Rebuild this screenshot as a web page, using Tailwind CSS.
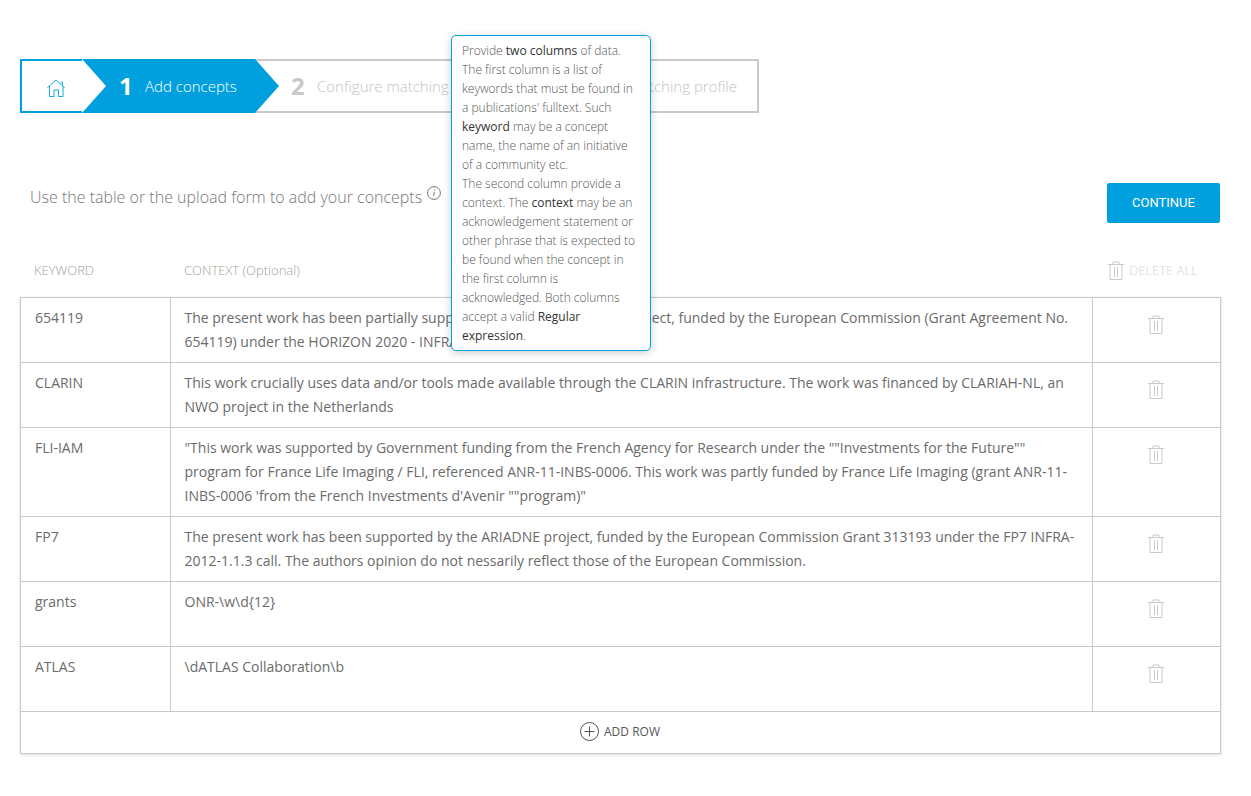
<!DOCTYPE html>
<html lang="en">
<head>
    <meta charset="UTF-8">
    <title>Add concepts</title>
    <script src="https://cdn.jsdelivr.net/npm/@tailwindcss/browser@4"></script>
</head>
<body class="bg-white font-['Open_Sans',sans-serif] text-[#6b6b6b]">
<div class="relative h-[796px] w-[1251px] overflow-hidden pt-[59px] pl-[20px]">
    <!-- Stepper -->
    <div class="flex h-[54px] w-[739px]">
        <div class="flex w-[62px] shrink-0 items-center justify-center border-y-2 border-l-2 border-[#00a0de] pl-[8px]">
            <svg class="mt-[3px] h-[18px] w-[18px] text-[#00a0de]" viewBox="0 0 18 18" fill="none" stroke="currentColor" stroke-width="0.9">
                <path d="M0.3 8.8 9 1l8.7 7.8M2.5 7v10.5H7V11h4.5v6.5h4.5V7M13.5 3.2h2v3"/>
            </svg>
        </div>
        <div class="z-10 flex w-[197px] shrink-0 items-center bg-[#00a0de] pl-[37px] text-white [clip-path:polygon(0_0,173px_0,100%_50%,173px_100%,0_100%,24px_50%)]">
            <span class="w-[26px] text-[24px] font-bold">1</span>
            <span class="text-[15px] font-light">Add concepts</span>
        </div>
        <div class="-ml-[24px] flex flex-1 items-center border-y-2 border-r-2 border-[#c9c9c9] pl-[36px]">
            <span class="w-[26px] text-[24px] font-bold text-[#c9c9c9]">2</span>
            <span class="text-[15px] font-light whitespace-nowrap text-[#c4c4c4]">Configure matching</span>
            <span class="ml-auto pr-[20px] text-[15px] font-light whitespace-nowrap text-[#c4c4c4]">matching profile</span>
        </div>
    </div>

    <!-- Tooltip -->
    <div class="absolute top-[35px] left-[451px] z-20 h-[316px] w-[200px] rounded-[5px] border border-[#00a0de] bg-white px-[10px] py-[5px] text-[12px] leading-[19px] font-light text-[#555] shadow-[0_2px_8px_rgba(0,0,0,0.2)]">
        Provide <span class="font-normal text-[#333]">two columns</span> of data.<br>
        The first column is a list of keywords that must be found in a publications' fulltext. Such <span class="font-normal text-[#333]">keyword</span> may be a concept name, the name of an initiative of a community etc.<br>
        The second column provide a context. The <span class="font-normal text-[#333]">context</span> may be an acknowledgement statement or other phrase that is expected to be found when the concept in the first column is acknowledged. Both columns accept a valid <span class="font-normal text-[#333]">Regular expression</span>.
    </div>

    <!-- Title row -->
    <div class="mt-[70px] flex h-[40px] w-[1200px] justify-between pl-[10px]">
        <div class="flex pt-[2px] text-[16px] font-light text-[#777]">
            Use the table or the upload form to add your concepts
            <svg class="mt-[1px] ml-[5px] h-[14px] w-[14px] text-[#666]" viewBox="0 0 14 14" fill="none" stroke="currentColor" stroke-width="0.9">
                <circle cx="7" cy="7" r="6.4"/><path d="M7.3 6 6.7 10M7.6 3.8 7.5 4.8"/>
            </svg>
        </div>
        <button class="h-[40px] w-[113px] rounded-[2px] bg-[#00a0de] font-['Roboto',sans-serif] text-[13px] text-white">CONTINUE</button>
    </div>

    <!-- Column titles -->
    <div class="mt-[26px] flex h-[48px] w-[1200px] items-start pt-[10px] text-[13px] font-light text-[#a8a098]">
        <div class="w-[150px] pl-[14px] leading-[22px]">KEYWORD</div>
        <div class="flex-1 pl-[14px] leading-[22px]">CONTEXT (Optional)</div>
        <div class="flex w-[112px] items-center gap-[5px] pt-[1px] leading-[20px] text-[#d6d6d6]">
            <svg class="h-[19px] w-[16px] text-[#c9c9c9]" viewBox="0 0 16 19" fill="none" stroke="currentColor">
                <path d="M0 3.5h16M5 3.5V1h6v2.5M2 3.5v15h12v-15M6.5 6v10M9.5 6v10"/>
            </svg>
            DELETE ALL
        </div>
    </div>

    <!-- Table -->
    <div class="w-[1201px] border border-[#c9c9c9] text-[14px] leading-[24px] shadow-[0_1px_3px_rgba(0,0,0,0.15)]">
        <div class="flex h-[65px] border-b border-[#c9c9c9]">
            <div class="w-[150px] border-r border-[#c9c9c9] px-[14px] py-[8px]">654119</div>
            <div class="w-[922px] border-r border-[#c9c9c9] py-[8px] pr-[10px] pl-[13.5px]">The present work has been partially supported by the <span class="tracking-[0.4px]">PARTHENOS</span> project, funded by the European Commission (Grant Agreement No. 654119) under the HORIZON 2020 - INFRADEV-4-2014 call.</div>
            <div class="flex flex-1 justify-center pt-[17px] pr-[1px]">
                <svg class="h-[19px] w-[16px] text-[#c9c9c9]" viewBox="0 0 16 19" fill="none" stroke="currentColor"><path d="M0 3.5h16M5 3.5V1h6v2.5M2 3.5v15h12v-15M6.5 6v10M9.5 6v10"/></svg>
            </div>
        </div>
        <div class="flex h-[65px] border-b border-[#c9c9c9]">
            <div class="w-[150px] border-r border-[#c9c9c9] px-[14px] py-[8px]">CLARIN</div>
            <div class="w-[922px] border-r border-[#c9c9c9] py-[8px] pr-[10px] pl-[13.5px]">This work crucially uses data and/or tools made available through the CLARIN infrastructure. The work was financed by CLARIAH-NL, an NWO project in the Netherlands</div>
            <div class="flex flex-1 justify-center pt-[17px] pr-[1px]">
                <svg class="h-[19px] w-[16px] text-[#c9c9c9]" viewBox="0 0 16 19" fill="none" stroke="currentColor"><path d="M0 3.5h16M5 3.5V1h6v2.5M2 3.5v15h12v-15M6.5 6v10M9.5 6v10"/></svg>
            </div>
        </div>
        <div class="flex h-[89px] border-b border-[#c9c9c9]">
            <div class="w-[150px] border-r border-[#c9c9c9] px-[14px] py-[8px]">FLI-IAM</div>
            <div class="w-[922px] border-r border-[#c9c9c9] py-[8px] pr-[10px] pl-[13.5px]">"This work was supported by Government funding from the French Agency for Research under the ""Investments for the Future"" program for France Life Imaging / FLI, referenced ANR-11-INBS-0006. This work was partly funded by France Life Imaging (grant ANR-11-INBS-0006 'from the French Investments d'Avenir ""program)"</div>
            <div class="flex flex-1 justify-center pt-[17px] pr-[1px]">
                <svg class="h-[19px] w-[16px] text-[#c9c9c9]" viewBox="0 0 16 19" fill="none" stroke="currentColor"><path d="M0 3.5h16M5 3.5V1h6v2.5M2 3.5v15h12v-15M6.5 6v10M9.5 6v10"/></svg>
            </div>
        </div>
        <div class="flex h-[65px] border-b border-[#c9c9c9]">
            <div class="w-[150px] border-r border-[#c9c9c9] px-[14px] py-[8px]">FP7</div>
            <div class="w-[922px] border-r border-[#c9c9c9] py-[8px] pr-[10px] pl-[13.5px]">The present work has been supported by the ARIADNE project, funded by the European Commission Grant 313193 under the FP7 INFRA-2012-1.1.3 call. The authors opinion do not nessarily reflect those of the European Commission.</div>
            <div class="flex flex-1 justify-center pt-[17px] pr-[1px]">
                <svg class="h-[19px] w-[16px] text-[#c9c9c9]" viewBox="0 0 16 19" fill="none" stroke="currentColor"><path d="M0 3.5h16M5 3.5V1h6v2.5M2 3.5v15h12v-15M6.5 6v10M9.5 6v10"/></svg>
            </div>
        </div>
        <div class="flex h-[65px] border-b border-[#c9c9c9]">
            <div class="w-[150px] border-r border-[#c9c9c9] px-[14px] py-[8px]">grants</div>
            <div class="w-[922px] border-r border-[#c9c9c9] py-[8px] pr-[10px] pl-[13.5px]">ONR-\w\d{12}</div>
            <div class="flex flex-1 justify-center pt-[17px] pr-[1px]">
                <svg class="h-[19px] w-[16px] text-[#c9c9c9]" viewBox="0 0 16 19" fill="none" stroke="currentColor"><path d="M0 3.5h16M5 3.5V1h6v2.5M2 3.5v15h12v-15M6.5 6v10M9.5 6v10"/></svg>
            </div>
        </div>
        <div class="flex h-[65px] border-b border-[#c9c9c9]">
            <div class="w-[150px] border-r border-[#c9c9c9] px-[14px] py-[8px]">ATLAS</div>
            <div class="w-[922px] border-r border-[#c9c9c9] py-[8px] pr-[10px] pl-[13.5px]">\dATLAS Collaboration\b</div>
            <div class="flex flex-1 justify-center pt-[17px] pr-[1px]">
                <svg class="h-[19px] w-[16px] text-[#c9c9c9]" viewBox="0 0 16 19" fill="none" stroke="currentColor"><path d="M0 3.5h16M5 3.5V1h6v2.5M2 3.5v15h12v-15M6.5 6v10M9.5 6v10"/></svg>
            </div>
        </div>
        <div class="flex h-[41px] items-center justify-center gap-[5px] pr-[1px] pb-[2px] text-[12px] text-[#555]">
            <svg class="h-[19px] w-[19px] text-[#555]" viewBox="0 0 19 19" fill="none" stroke="currentColor">
                <circle cx="9.5" cy="9.5" r="9"/><path d="M9.5 4.5v10M4.5 9.5h10"/>
            </svg>
            ADD ROW
        </div>
    </div>
</div>
</body>
</html>
